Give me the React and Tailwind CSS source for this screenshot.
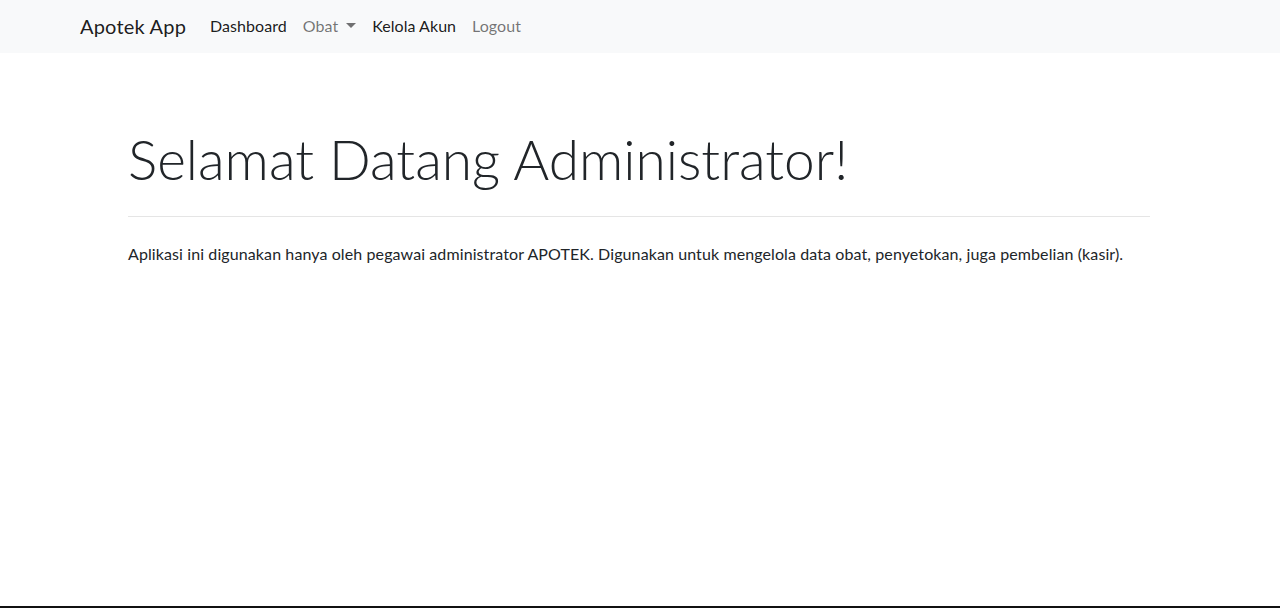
import React from 'react';

function Navbar() {
  return (
    <nav className="h-[53px] bg-[#f8f9fa] flex items-center pl-[80px] pb-[2px]">
      <a className="text-[20px] text-[rgba(0,0,0,0.9)] mr-[16px] tracking-[0.2px]">Apotek App</a>
      <ul className="flex items-center text-[16px] tracking-[0.05px]">
        <li className="px-[8px] text-[rgba(0,0,0,0.9)]">Dashboard</li>
        <li className="px-[8px] text-[rgba(0,0,0,0.55)] flex items-center">
          Obat
          <span className="ml-[8px] inline-block w-0 h-0 border-l-[5px] border-r-[5px] border-t-[5px] border-l-transparent border-r-transparent border-t-[rgba(0,0,0,0.55)]" />
        </li>
        <li className="px-[8px] text-[rgba(0,0,0,0.9)]">Kelola Akun</li>
        <li className="px-[8px] text-[rgba(0,0,0,0.55)]">Logout</li>
      </ul>
    </nav>
  );
}

export default function App() {
  return (
    <div
      className="h-[608px] flex flex-col bg-white text-[#212529] border-b-2 border-[#111]"
      style={{ fontFamily: 'Lato, "Open Sans", sans-serif' }}
    >
      <Navbar />
      <main className="flex-grow pt-[73px] pl-[128px] pr-[130px]">
        <h1 className="text-[55px] font-light leading-[1.2] mb-[8px]">Selamat Datang Administrator!</h1>
        <hr className="mt-[24px] mb-[25px] border-t border-[rgba(0,0,0,0.1)]" />
        <p className="text-[16px] leading-[24px] tracking-[0.1px]">
          Aplikasi ini digunakan hanya oleh pegawai administrator APOTEK. Digunakan untuk mengelola data obat, penyetokan, juga pembelian (kasir).
        </p>
      </main>
    </div>
  );
}
